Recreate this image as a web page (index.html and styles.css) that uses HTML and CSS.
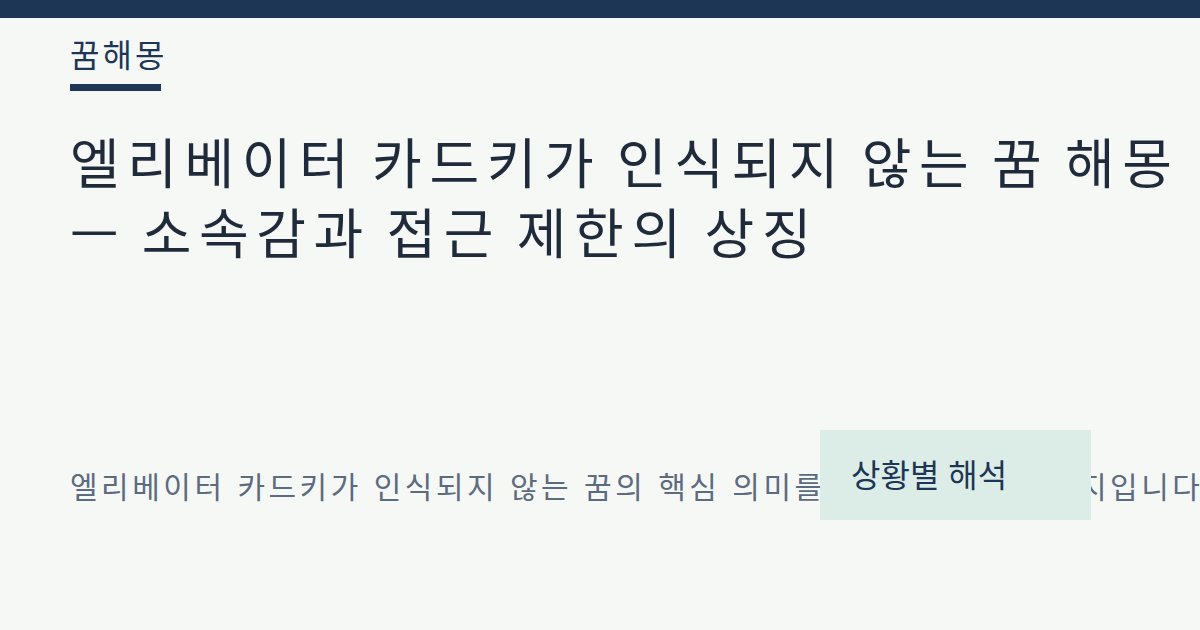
FILE: index.html
```html
<!DOCTYPE html>
<html lang="ko">
<head>
  <meta charset="UTF-8" />
  <meta name="viewport" content="width=device-width, initial-scale=1.0"/>
  <title>엘리베이터 카드키가 인식되지 않는 꿈 해몽</title>
  <link rel="stylesheet" href="styles.css">
</head>
<body>
  <div class="topbar"></div>
  <main class="page">
    <div class="brand">꿈해몽</div>
    <h1 class="title">엘리베이터 카드키가 인식되지 않는 꿈 해몽<br>— 소속감과 접근 제한의 상징</h1>
    <p class="lead">엘리베이터 카드키가 인식되지 않는 꿈의 핵심 의미를 정리한 해몽 페이지입니다.</p>
    <nav class="toc">상황별 해석</nav>
  </main>
</body>
</html>
```

FILE: styles.css
```css
body {
  margin: 0;
  font-family: "Noto Sans CJK KR", "Noto Sans", sans-serif;
  background: #f6f8f6;
  color: #1f2a3a;
  overflow: hidden;
}

.topbar {
  height: 18px;
  background: #1e3656;
}

.page {
  position: relative;
  height: 600px;
  padding: 12px 0 0 70px;
}

.brand {
  font-size: 32px;
  line-height: 46px;
  letter-spacing: 3px;
  color: #1e3656;
}

/* short underline under the site name */
.brand::after {
  content: "";
  display: block;
  width: 91px;
  height: 7px;
  margin-top: 8px;
  background: #1e3656;
}

.title {
  margin: 35px 0 0;
  font-size: 54px;
  font-weight: 400;
  line-height: 70px;
  letter-spacing: 7.6px;
  word-spacing: -7px;
  color: #1f2a3a;
}

.lead {
  margin: 197px 0 0;
  font-size: 30px;
  line-height: 44px;
  letter-spacing: 3.5px;
  color: #5d6b80;
  white-space: nowrap;
}

/* floating section index, sits over the intro line */
.toc {
  position: absolute;
  left: 820px;
  top: 412px;
  width: 240px;
  height: 90px;
  padding-left: 31px;
  background: #dcede7;
  color: #1e3656;
  font-size: 32px;
  line-height: 86px;
}
```
